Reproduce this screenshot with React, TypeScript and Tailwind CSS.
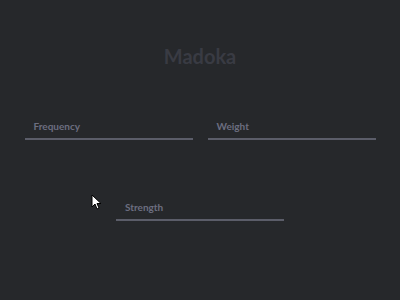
import React from "react";

function Field({ label }: { label: string }) {
  return (
    <div className="w-[168px] flex flex-col">
      <div className="pl-[9px] text-[10px] leading-[12px] font-bold text-[#6c6e80]">{label}</div>
      <div className="mt-[6px] h-[2px] bg-[#5b5d69]" />
    </div>
  );
}

export default function App() {
  return (
    <div
      className="relative w-[400px] h-[300px] bg-[#26282b] overflow-hidden flex flex-col items-center"
      style={{ fontFamily: "Lato, 'Open Sans', sans-serif" }}
    >
      <div className="mt-[44px] text-[20px] leading-[24px] font-bold text-[#393b43]">Madoka</div>
      <div className="mt-[52px] flex gap-[15px]">
        <Field label="Frequency" />
        <Field label="Weight" />
      </div>
      <div className="mt-[61px] flex">
        <Field label="Strength" />
      </div>
      <svg
        className="absolute left-[91px] top-[194px]"
        width="11"
        height="16"
        viewBox="0 0 11 16"
      >
        <path
          d="M1 1 L1 13 L4 10 L6 15 L8 14 L6 9.5 L10 9.5 Z"
          fill="#ffffff"
          stroke="#000000"
          strokeWidth="1"
          strokeLinejoin="round"
        />
      </svg>
    </div>
  );
}
